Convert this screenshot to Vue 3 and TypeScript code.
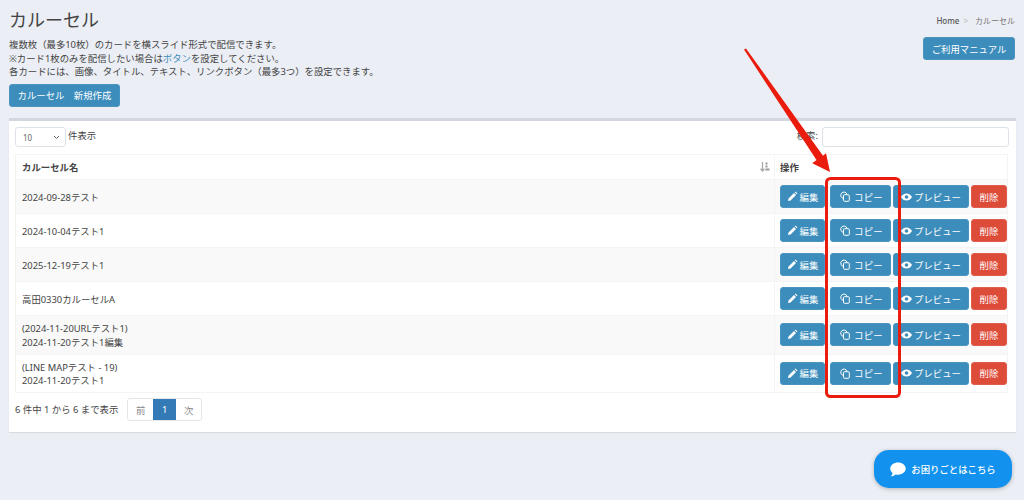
<template>
  <div class="page">
    <header class="head">
      <div class="head-left">
        <h1>カルーセル</h1>
        <p class="lead">
          複数枚（最多10枚）のカードを横スライド形式で配信できます。<br />
          ※カード1枚のみを配信したい場合は<a>ボタン</a>を設定してください。<br />
          各カードには、画像、タイトル、テキスト、リンクボタン（最多3つ）を設定できます。
        </p>
        <button class="btn new">カルーセル　新規作成</button>
      </div>
      <div class="head-right">
        <div class="crumb"><b>Home</b><i>&gt;</i><span>カルーセル</span></div>
        <button class="btn manual">ご利用マニュアル</button>
      </div>
    </header>

    <section class="box">
      <div class="tools">
        <div class="len">
          <div class="select">
            10
            <svg width="7" height="5" viewBox="0 0 7 5"><path d="M1 1l2.500 2.500L6 1" fill="none" stroke="#666" stroke-width="1" /></svg>
          </div>
          <span>件表示</span>
        </div>
        <div class="search">
          <span>検索:</span>
          <div class="input"></div>
        </div>
      </div>

      <table>
        <thead>
          <tr>
            <th class="name">
              <div class="th-in">
                カルーセル名
                <svg width="10" height="10" viewBox="0 0 10 10"><path d="M2.500 0v8.500M0.500 6.800l2 2.200 2-2.200" fill="none" stroke="#aaa" stroke-width="1.300" /><path d="M5.500 0.500h2v2h-2zM5.500 3.500h2v2h-2zM5.500 6.500h4v2h-4z" fill="#999" /></svg>
              </div>
            </th>
            <th class="op">操作</th>
          </tr>
        </thead>
        <tbody>
          <tr v-for="(row, i) in rows" :key="i" :class="{ odd: i % 2 === 0, tall: row.length > 1 }">
            <td class="name">
              <div v-for="line in row" :key="line">{{ line }}</div>
            </td>
            <td class="acts">
              <div class="acts-in">
                <button class="btn edit">
                  <svg width="11" height="11" viewBox="0 0 11 11"><path d="M1 10l0.500-2.500 5.500-5.500 2 2-5.500 5.500zM7.700 1.300l0.800-0.800 2 2-0.800 0.800z" fill="#fff" /></svg>
                  編集
                </button>
                <button class="btn copy">
                  <svg width="10" height="11" viewBox="0 0 10 11"><path d="M3.300 7.400A3.200 3.200 0 1 1 7 3.200" fill="none" stroke="#fff" stroke-width="1" /><rect x="3.500" y="3.700" width="5.800" height="6.600" rx="1" fill="none" stroke="#fff" stroke-width="1" /></svg>
                  <span>コピー</span>
                </button>
                <button class="btn prev">
                  <svg width="11" height="8" viewBox="0 0 11 8"><path d="M0 4c1.300-2.400 3.200-3.600 5.500-3.600S9.700 1.600 11 4C9.700 6.400 7.800 7.600 5.500 7.600S1.300 6.400 0 4z" fill="#fff" /><circle cx="5.500" cy="4" r="1.800" fill="#3c8dbc" /></svg>
                  プレビュー
                </button>
                <button class="btn del">削除</button>
              </div>
            </td>
          </tr>
        </tbody>
      </table>

      <div class="foot">
        <span>6 件中 1 から 6 まで表示</span>
        <div class="pager">
          <a>前</a>
          <a class="on">1</a>
          <a>次</a>
        </div>
      </div>
    </section>

    <button class="help">
      <svg width="16" height="15" viewBox="0 0 16 15"><path d="M8 0.500c4.300 0 7.700 2.700 7.700 6.100S12.300 12.700 8 12.700c-.9 0-1.700-.1-2.500-.3C4.400 13.400 2.900 14.300.9 14.300c.9-1 1.500-2.100 1.700-3.300C1.100 9.900.3 8.300.3 6.600.3 3.200 3.700.5 8 .5z" fill="#fff" /></svg>
      お困りごとはこちら
    </button>

    <svg class="mark" width="1024" height="500" viewBox="0 0 1024 500">
      <path d="M744 49.500L746 48.500L823 155.700L826 153.300L830 172L812.300 163.300L816.500 160z" fill="#ea1c0d" />
      <rect x="826.500" y="178.500" width="73" height="218" rx="4" fill="none" stroke="#ea1c0d" stroke-width="3" />
    </svg>
  </div>
</template>

<script setup lang="ts">
  const rows: string[][] = [
    ['2024-09-28テスト'],
    ['2024-10-04テスト1'],
    ['2025-12-19テスト1'],
    ['高田0330カルーセルA'],
    ['(2024-11-20URLテスト1)', '2024-11-20テスト1編集'],
    ['(LINE MAPテスト - 19)', '2024-11-20テスト1'],
  ]
</script>

<style>
  html,
  body {
    margin: 0;
    background: #ebeef4;
  }
</style>

<style scoped>
  .page {
    position: relative;
    width: 1024px;
    height: 500px;
    overflow: hidden;
    box-sizing: border-box;
    padding: 0 8px 0 9px;
    background: #ebeef4;
    color: #444;
    font-family: 'Noto Sans', 'Noto Sans CJK JP', sans-serif;
    font-size: 9.400px;
  }
  .head {
    display: flex;
    justify-content: space-between;
    height: 118px;
  }
  h1 {
    margin: 0;
    padding-top: 9px;
    font-size: 18px;
    font-weight: 400;
    line-height: 23px;
    color: #444;
  }
  .lead {
    margin: 6px 0 0;
    line-height: 13.500px;
  }
  .lead a {
    color: #3c8dbc;
  }
  .btn {
    border: 1px solid #4a94c0;
    border-radius: 3px;
    background: #3c8dbc;
    color: #fff;
    font: inherit;
    padding: 0;
    display: inline-flex;
    align-items: center;
    justify-content: center;
  }
  .new {
    margin-top: 5px;
    width: 111px;
    height: 23px;
  }
  .head-right {
    display: flex;
    flex-direction: column;
    align-items: flex-end;
  }
  .crumb {
    margin-top: 15px;
    font-size: 8px;
    line-height: 12px;
    color: #777;
    display: flex;
    gap: 4px;
    padding-right: 1px;
  }
  .crumb b {
    font-weight: 500;
    color: #555;
  }
  .crumb i {
    font-style: normal;
    color: #bbb;
    margin-right: 3px;
  }
  .manual {
    margin: 10px 1px 0 0;
    width: 92px;
    height: 23px;
  }
  .box {
    width: 1007px;
    height: 314px;
    box-sizing: border-box;
    border-top: 3px solid #d2d6de;
    background: #fff;
    padding: 6px 7px 0 6px;
    box-shadow: 0 1px 1px rgba(0, 0, 0, 0.08);
  }
  .tools {
    display: flex;
    justify-content: space-between;
    height: 27px;
  }
  .len,
  .search {
    display: flex;
    align-items: flex-start;
    gap: 2px;
  }
  .len span {
    line-height: 17px;
  }
  .search span {
    line-height: 17px;
    margin-right: 2px;
  }
  .select {
    width: 51px;
    height: 20px;
    box-sizing: border-box;
    border: 1px solid #dfe2e8;
    border-radius: 3px;
    padding: 0 5px 0 7px;
    display: flex;
    align-items: center;
    justify-content: space-between;
    font-size: 8px;
    color: #666;
  }
  .input {
    width: 187px;
    height: 20px;
    box-sizing: border-box;
    border: 1px solid #dfe2e8;
    border-radius: 3px;
  }
  table {
    width: 993px;
    border-collapse: collapse;
    table-layout: fixed;
  }
  th,
  td {
    border: 1px solid #f4f4f4;
    padding: 0 6px;
    text-align: left;
  }
  th {
    height: 24px;
    font-weight: 700;
  }
  th.name {
    width: 746px;
  }
  th.op {
    padding-left: 5px;
  }
  .th-in {
    display: flex;
    justify-content: space-between;
    align-items: center;
    margin-right: -1px;
  }
  .th-in svg {
    margin-right: -1px;
  }
  tbody tr {
    height: 34px;
  }
  tbody tr.tall {
    height: 38.500px;
  }
  tr.odd {
    background: #f9f9f9;
  }
  td.name {
    line-height: 13.400px;
    padding-top: 2px;
  }
  td.acts {
    padding: 0 0 0 5px;
  }
  .acts-in {
    display: flex;
    height: 23px;
  }
  .acts .btn {
    height: 23px;
    box-sizing: border-box;
    flex: none;
  }
  .edit {
    width: 45px;
    gap: 2px;
  }
  .copy {
    width: 61px;
    margin-left: 5px;
    gap: 4px;
    padding-left: 2px;
  }
  .copy span {
    letter-spacing: 0.3px;
  }
  .prev {
    width: 76px;
    margin-left: 2px;
    gap: 2px;
  }
  .acts .del {
    width: 36px;
    margin-left: 2px;
    background: #dd4b39;
    border-color: #e25c4b;
  }
  .foot {
    display: flex;
    align-items: center;
    gap: 9px;
    margin-top: 6px;
  }
  .foot span {
    margin-top: -3px;
  }
  .pager {
    display: flex;
    height: 23px;
    border: 1px solid #e4e6ea;
    border-radius: 3px;
    box-sizing: border-box;
    margin-top: -1px;
  }
  .pager a {
    width: 25px;
    display: flex;
    align-items: center;
    justify-content: center;
    color: #888;
  }
  .pager a.on {
    background: #337ab7;
    color: #fff;
    width: 23px;
  }
  .help {
    position: absolute;
    left: 874px;
    top: 450px;
    width: 138px;
    height: 38px;
    border: 0;
    border-radius: 15px;
    background: #1292ee;
    color: #fff;
    font: inherit;
    font-weight: 500;
    display: flex;
    align-items: center;
    justify-content: center;
    gap: 5px;
    box-shadow: 0 1px 4px rgba(0, 0, 0, 0.25);
  }
  .mark {
    position: absolute;
    inset: 0;
    pointer-events: none;
  }
</style>
